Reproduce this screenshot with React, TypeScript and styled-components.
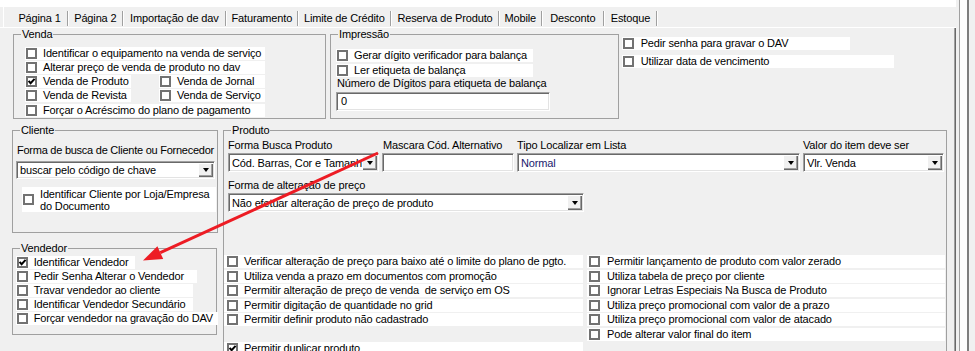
import React from 'react';
import styled, { createGlobalStyle, css } from 'styled-components';

const GlobalStyle = createGlobalStyle`
    html, body {
        margin: 0;
        padding: 0;
        background: #f0f0f0;
    }
    body {
        font-family: 'Liberation Sans', Arial, sans-serif;
        font-size: 11px;
        letter-spacing: -0.15px;
        color: #000;
    }
`;

const sunken = css`
    box-sizing: border-box;
    border: 1px solid;
    border-color: #a0a0a0 #fff #fff #a0a0a0;
    box-shadow: inset 1px 1px #696969, inset -1px -1px #e3e3e3;
    background: #fff;
`;

const Screen = styled.div`
    position: relative;
    display: flex;
    width: 975px;
    height: 351px;
    overflow: hidden;
    background: #f0f0f0;
`;

const Main = styled.div`
    display: flex;
    flex-direction: column;
    flex: none;
    width: 956px;
    height: 351px;
`;

const TopStrip = styled.div`
    flex: none;
    height: 7px;
    background: #fff;
`;

const TabBar = styled.div`
    flex: none;
    display: flex;
    align-items: center;
    height: 20px;
    padding-left: 3px;
    border-bottom: 1px solid #fff;
`;

const Tab = styled.div<{ $w: number; $pl?: number; $active?: boolean }>`
    box-sizing: border-box;
    width: ${p => p.$w}px;
    height: 20px;
    padding: 2px 0 0 ${p => p.$pl ?? 0}px;
    line-height: 18px;
    text-align: center;
    white-space: nowrap;
    ${p =>
        p.$active &&
        css`
            border-left: 1px solid #fff;
        `}
`;

const TabSeparator = styled.div`
    flex: none;
    width: 0;
    height: 15px;
    margin-top: 2px;
    border-left: 1px solid #a0a0a0;
    border-right: 1px solid #fff;
`;

const Panel = styled.div`
    flex: 1;
    min-height: 0;
    overflow: hidden;
    display: flex;
    flex-direction: column;
    padding-left: 12px;
    border-right: 1px solid #696969;
    box-shadow: inset -1px 0 #a0a0a0;
`;

const ScrollEdge = styled.div`
    flex: none;
    display: flex;
    width: 19px;
    padding-left: 3px;
    box-sizing: border-box;
`;

const ScrollTrack = styled.div`
    width: 7px;
    background: #fcfcfc;
    border-left: 1px solid #a0a0a0;
    border-right: 2px solid #7c7c7c;
`;

const TopRow = styled.div`
    flex: none;
    display: flex;
    align-items: flex-start;
`;

const BottomRow = styled.div`
    flex: none;
    display: flex;
    align-items: flex-start;
    margin-top: 5px;
`;

const LeftColumn = styled.div`
    display: flex;
    flex-direction: column;
    gap: 9px;
    width: 206px;
`;

const GroupBox = styled.fieldset<{ $w: number; $h: number; $ml?: number }>`
    box-sizing: border-box;
    flex: none;
    width: ${p => p.$w}px;
    height: ${p => p.$h}px;
    min-width: 0;
    margin: 0 0 0 ${p => p.$ml ?? 0}px;
    padding: 0;
    border: 1px solid #a0a0a0;
`;

const Legend = styled.legend`
    height: 13px;
    margin-left: 7px;
    padding: 0 1px;
    line-height: 13px;
`;

const GroupBody = styled.div<{ $pt: number; $pl: number; $gap?: number }>`
    display: flex;
    flex-direction: column;
    gap: ${p => p.$gap ?? 0}px;
    padding: ${p => p.$pt}px 0 0 ${p => p.$pl}px;
`;

const InlineChecks = styled.div<{ $gap: number }>`
    display: flex;
    gap: ${p => p.$gap}px;
`;

const CheckRow = styled.div<{ $w: number; $h?: number; $pl?: number }>`
    box-sizing: border-box;
    display: flex;
    align-items: center;
    flex: none;
    width: ${p => p.$w}px;
    height: ${p => p.$h ?? 13}px;
    padding-left: ${p => p.$pl ?? 1}px;
    background: #fff;
    line-height: 13px;
`;

const Box = styled.span`
    position: relative;
    flex: none;
    box-sizing: border-box;
    width: 11px;
    height: 11px;
    border: 2px solid #727272;
    background: #fff;
`;

const TickSvg = styled.svg`
    position: absolute;
    top: -2px;
    left: -2px;
    width: 11px;
    height: 11px;
`;

const CheckText = styled.span<{ $gap?: number; $multi?: boolean }>`
    margin-left: ${p => p.$gap ?? 6}px;
    white-space: ${p => (p.$multi ? 'normal' : 'pre')};
    line-height: ${p => (p.$multi ? 12 : 13)}px;
`;

const FieldLabel = styled.div<{ $ml?: number; $ls?: number }>`
    height: 13px;
    margin-left: ${p => p.$ml ?? 0}px;
    line-height: 13px;
    white-space: nowrap;
    letter-spacing: ${p => p.$ls ?? -0.15}px;
`;

const FieldRow = styled.div<{ $mt?: number }>`
    display: flex;
    gap: 3px;
    margin-top: ${p => p.$mt ?? 0}px;
    padding-left: 4px;
`;

const Field = styled.div<{ $w: number }>`
    display: flex;
    flex-direction: column;
    gap: 1.5px;
    width: ${p => p.$w}px;
`;

const Combo = styled.div<{ $w?: number; $h?: number; $mt?: number }>`
    ${sunken};
    display: flex;
    width: ${p => (p.$w ? `${p.$w}px` : '100%')};
    height: ${p => p.$h ?? 19}px;
    margin-top: ${p => p.$mt ?? 0}px;
    padding: 1px;
`;

const ComboText = styled.div<{ $color?: string }>`
    flex: 1;
    min-width: 0;
    padding-left: 2px;
    overflow: hidden;
    white-space: nowrap;
    display: flex;
    align-items: center;
    color: ${p => p.$color ?? '#000'};
`;

const DropButton = styled.div`
    flex: none;
    display: flex;
    align-items: center;
    justify-content: center;
    width: 15px;
    background: #f0f0f0;
    box-shadow: inset 1px 1px #fff, inset -1px -1px #696969, inset -2px -2px #a0a0a0;
`;

const Arrow = styled.span`
    width: 0;
    height: 0;
    border-left: 3px solid transparent;
    border-right: 3px solid transparent;
    border-top: 4px solid #000;
`;

const TextInput = styled.div<{ $w?: number; $mt?: number }>`
    ${sunken};
    display: flex;
    align-items: center;
    width: ${p => (p.$w ? `${p.$w}px` : '100%')};
    height: 19px;
    margin-top: ${p => p.$mt ?? 0}px;
    padding-left: 4px;
`;

const SideChecks = styled.div`
    display: flex;
    flex-direction: column;
    gap: 5px;
    margin: 9px 0 0 2.7px;
`;

const OptionColumns = styled.div`
    display: flex;
    gap: 4px;
    margin-top: 43px;
`;

const OptionColumn = styled.div`
    display: flex;
    flex-direction: column;
    gap: 1.5px;
`;

const EmptyRow = styled.div`
    height: 13px;
`;

const AnnotationLayer = styled.svg`
    position: absolute;
    top: 0;
    left: 0;
    width: 975px;
    height: 351px;
    pointer-events: none;
`;

interface CheckProps {
    label: string;
    w: number;
    checked?: boolean;
    h?: number;
    pl?: number;
    gap?: number;
    multi?: boolean;
}

const Check = ({ label, w, checked, h, pl, gap, multi }: CheckProps): JSX.Element => (
    <CheckRow $w={w} $h={h} $pl={pl}>
        <Box>
            {checked && (
                <TickSvg viewBox="0 0 11 11">
                    <path d="M2.6 4.8 L4.6 7.2 L8.6 2.8" fill="none" stroke="#000" strokeWidth="2" />
                </TickSvg>
            )}
        </Box>
        <CheckText $gap={gap} $multi={multi}>
            {label}
        </CheckText>
    </CheckRow>
);

const ComboBox = ({
    value,
    w,
    h,
    mt,
    color,
}: {
    value: string;
    w?: number;
    h?: number;
    mt?: number;
    color?: string;
}): JSX.Element => (
    <Combo $w={w} $h={h} $mt={mt}>
        <ComboText $color={color}>{value}</ComboText>
        <DropButton>
            <Arrow />
        </DropButton>
    </Combo>
);

const tabs = [
    { label: 'Página 1', w: 64, pl: 8 },
    { label: 'Página 2', w: 52.7 },
    { label: 'Importação de dav', w: 101.3 },
    { label: 'Faturamento', w: 69.7 },
    { label: 'Limite de Crédito', w: 91.3 },
    { label: 'Reserva de Produto', w: 106 },
    { label: 'Mobile', w: 40.7 },
    { label: 'Desconto', w: 60.3 },
    { label: 'Estoque', w: 51 },
];

const leftOptions = [
    'Verificar alteração de preço para baixo até o limite do plano de pgto.',
    'Utiliza venda a prazo em documentos com promoção',
    'Permitir alteração de preço de venda  de serviço em OS',
    'Permitir digitação de quantidade no grid',
    'Permitir definir produto não cadastrado',
];

const rightOptions = [
    'Permitir lançamento de produto com valor zerado',
    'Utiliza tabela de preço por cliente',
    'Ignorar Letras Especiais Na Busca de Produto',
    'Utiliza preço promocional com valor de a prazo',
    'Utiliza preço promocional com valor de atacado',
    'Pode alterar valor final do item',
];

const vendedorOptions = [
    { label: 'Identificar Vendedor', w: 119.3, checked: true },
    { label: 'Pedir Senha Alterar o Vendedor', w: 181 },
    { label: 'Travar vendedor ao cliente', w: 177 },
    { label: 'Identificar Vendedor Secundário', w: 177 },
    { label: 'Forçar vendedor na gravação do DAV', w: 202.6 },
];

const App = (): JSX.Element => (
    <>
        <GlobalStyle />
        <Screen>
            <Main>
                <TopStrip />
                <TabBar>
                    {tabs.map((tab, i) => (
                        <React.Fragment key={tab.label}>
                            <Tab $w={tab.w} $pl={tab.pl} $active={i === 0}>
                                {tab.label}
                            </Tab>
                            <TabSeparator />
                        </React.Fragment>
                    ))}
                </TabBar>
                <Panel>
                    <TopRow>
                        <GroupBox $w={313} $h={91} $ml={1}>
                            <Legend>Venda</Legend>
                            <GroupBody $pt={5.7} $pl={11} $gap={1.25}>
                                <Check w={240} label="Identificar o equipamento na venda de serviço" />
                                <Check w={240} label="Alterar preço de venda de produto no dav" />
                                <InlineChecks $gap={28.3}>
                                    <Check w={105.7} checked label="Venda de Produto" />
                                    <Check w={106} label="Venda de Jornal" />
                                </InlineChecks>
                                <InlineChecks $gap={28.3}>
                                    <Check w={105.7} label="Venda de Revista" />
                                    <Check w={106} label="Venda de Serviço" />
                                </InlineChecks>
                                <Check w={240} label="Forçar o Acréscimo do plano de pagamento" />
                            </GroupBody>
                        </GroupBox>
                        <GroupBox $w={289} $h={91} $ml={4}>
                            <Legend>Impressão</Legend>
                            <GroupBody $pt={8.3} $pl={5} $gap={1.7}>
                                <Check w={197} label="Gerar dígito verificador para balança" />
                                <Check w={197} label="Ler etiqueta de balança" />
                            </GroupBody>
                            <GroupBody $pt={0.5} $pl={5}>
                                <FieldLabel $ml={1}>Número de Dígitos para etiqueta de balança</FieldLabel>
                                <TextInput $w={214} $mt={1.5}>
                                    0
                                </TextInput>
                            </GroupBody>
                        </GroupBox>
                        <SideChecks>
                            <Check w={228} gap={7} label="Pedir senha para gravar o DAV" />
                            <Check w={272} gap={7} label="Utilizar data de vencimento" />
                        </SideChecks>
                    </TopRow>
                    <BottomRow>
                        <LeftColumn>
                            <GroupBox $w={206} $h={109}>
                                <Legend>Cliente</Legend>
                                <GroupBody $pt={6.5} $pl={3}>
                                    <FieldLabel $ml={1} $ls={-0.25}>
                                        Forma de busca de Cliente ou Fornecedor
                                    </FieldLabel>
                                    <ComboBox w={199} h={18} mt={4.5} value="buscar pelo código de chave" />
                                </GroupBody>
                                <GroupBody $pt={8} $pl={9}>
                                    <Check
                                        w={194}
                                        h={25}
                                        multi
                                        label="Identificar Cliente por Loja/Empresa do Documento"
                                    />
                                </GroupBody>
                            </GroupBox>
                            <GroupBox $w={205} $h={93}>
                                <Legend>Vendedor</Legend>
                                <GroupBody $pt={0.7} $pl={2.7} $gap={1.2}>
                                    {vendedorOptions.map(opt => (
                                        <Check key={opt.label} w={opt.w} checked={opt.checked} label={opt.label} />
                                    ))}
                                </GroupBody>
                            </GroupBox>
                        </LeftColumn>
                        <GroupBox $w={724} $h={240} $ml={5}>
                            <Legend>Produto</Legend>
                            <GroupBody $pt={1.5} $pl={0}>
                                <FieldRow>
                                    <Field $w={151}>
                                        <FieldLabel>Forma Busca Produto</FieldLabel>
                                        <ComboBox value="Cód. Barras, Cor e Tamanho" />
                                    </Field>
                                    <Field $w={132}>
                                        <FieldLabel $ml={1}>Mascara Cód. Alternativo</FieldLabel>
                                        <TextInput />
                                    </Field>
                                    <Field $w={283}>
                                        <FieldLabel>Tipo Localizar em Lista</FieldLabel>
                                        <ComboBox value="Normal" color="#1a1a6e" />
                                    </Field>
                                    <Field $w={141}>
                                        <FieldLabel>Valor do item deve ser</FieldLabel>
                                        <ComboBox value="Vlr. Venda" />
                                    </Field>
                                </FieldRow>
                                <FieldRow $mt={6.5}>
                                    <Field $w={356}>
                                        <FieldLabel>Forma de alteração de preço</FieldLabel>
                                        <ComboBox value="Não efetuar alteração de preço de produto" />
                                    </Field>
                                </FieldRow>
                                <OptionColumns>
                                    <OptionColumn>
                                        {leftOptions.map(label => (
                                            <Check key={label} w={359} pl={3} label={label} />
                                        ))}
                                        <EmptyRow />
                                        <Check w={359} pl={3} checked label="Permitir duplicar produto" />
                                    </OptionColumn>
                                    <OptionColumn>
                                        {rightOptions.map(label => (
                                            <Check key={label} w={358} pl={2} gap={7} label={label} />
                                        ))}
                                    </OptionColumn>
                                </OptionColumns>
                            </GroupBody>
                        </GroupBox>
                    </BottomRow>
                </Panel>
            </Main>
            <ScrollEdge>
                <ScrollTrack />
            </ScrollEdge>
            <AnnotationLayer viewBox="0 0 975 351">
                <line x1="378" y1="153" x2="160.3" y2="252.6" stroke="#ed1c24" strokeWidth="3" />
                <polygon points="143,260.5 163.2,259 157.4,246.2" fill="#ed1c24" />
            </AnnotationLayer>
        </Screen>
    </>
);

export default App;
